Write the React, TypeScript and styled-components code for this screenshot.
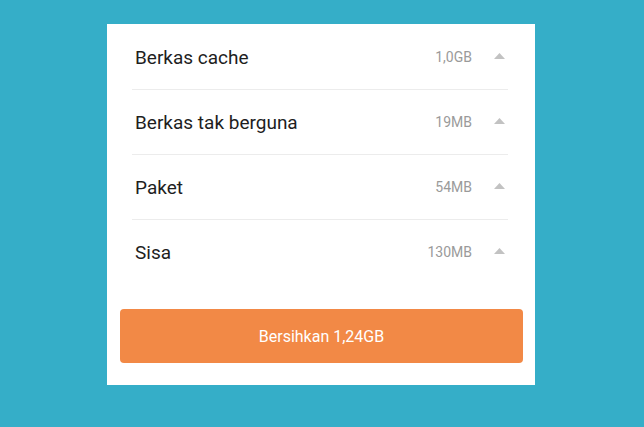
import React from "react";
import styled, { createGlobalStyle } from "styled-components";

const GlobalStyle = createGlobalStyle`
    html, body {
        margin: 0;
        padding: 0;
        background: #35aec8;
    }
    body {
        font-family: Roboto, "Liberation Sans", sans-serif;
    }
`

const items = [
    { name: "Berkas cache", size: "1,0GB" },
    { name: "Berkas tak berguna", size: "19MB" },
    { name: "Paket", size: "54MB" },
    { name: "Sisa", size: "130MB" },
]

const Caret = () => (
    <svg width="11" height="6" viewBox="0 0 11 6">
        <path d="M0 6 L5.5 0 L11 6 Z" fill="#c2c2c2" />
    </svg>
)

export default function App() {
    return (
        <Page>
            <GlobalStyle />
            <Card>
                <List>
                    {items.map((item, i) => (
                        <Row key={item.name} last={i === items.length - 1}>
                            <Label>{item.name}</Label>
                            <Size>{item.size}</Size>
                            <CaretWrap><Caret /></CaretWrap>
                        </Row>
                    ))}
                </List>
                <CleanButton>Bersihkan 1,24GB</CleanButton>
            </Card>
        </Page>
    )
}

const Page = styled.div`
    min-height: 427px;
    padding: 24px 0 0 107px;
    box-sizing: border-box;
`

const Card = styled.div`
    width: 428px;
    height: 361px;
    background: #fff;
    box-sizing: border-box;
    padding: 1px 12px 0 13px;
    display: flex;
    flex-direction: column;
`

const List = styled.div`
    padding: 0 15px 0 12px;
    display: flex;
    flex-direction: column;
`

const Row = styled.div<{ last?: boolean }>`
    height: 64px;
    display: flex;
    align-items: center;
    padding: 0 3px 0 3px;
    border-bottom: 1px solid ${(p) => (p.last ? "transparent" : "#ececec")};
`

const Label = styled.span`
    flex: 1;
    font-size: 19px;
    color: #1e1e1e;
`

const Size = styled.span`
    font-size: 14px;
    color: #9a9a9a;
`

const CaretWrap = styled.span`
    display: flex;
    margin-left: 22px;
    margin-top: -2px;
`

const CleanButton = styled.button`
    margin-top: 24px;
    height: 54px;
    width: 100%;
    border: none;
    border-radius: 4px;
    background: #f28946;
    color: #fff;
    font-family: Roboto, "Liberation Sans", sans-serif;
    font-size: 16px;
    cursor: pointer;
`
